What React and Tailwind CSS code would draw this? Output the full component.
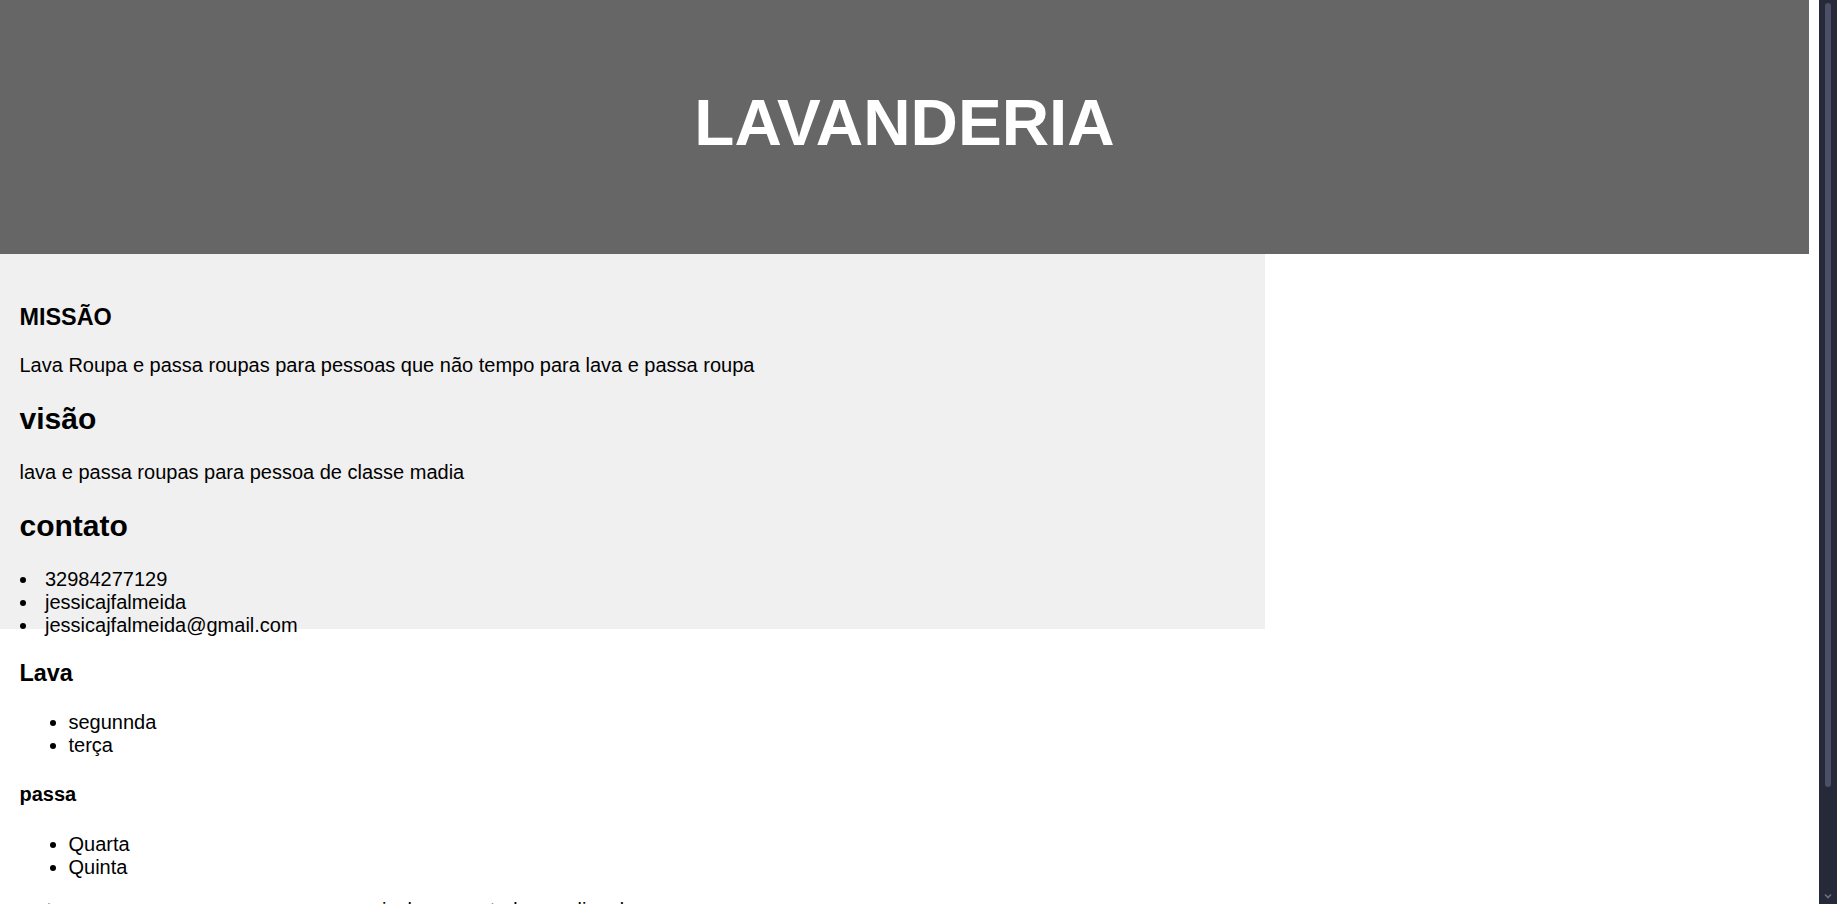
import React from "react";

function Section() {
  return (
    <div className="w-[1265px] h-[375px] bg-[#f0f0f0] pl-[19.5px] pt-[26.3px]">
      <h3 className="text-[23.4px] font-bold leading-[normal] my-[23.4px]">MISSÃO</h3>
      <p className="text-[20px] leading-[normal] my-[20px]">
        Lava Roupa e passa roupas para pessoas que não tempo para lava e passa roupa
      </p>
      <h2 className="text-[30px] font-bold leading-[normal] my-[24.9px]">visão</h2>
      <p className="text-[20px] leading-[normal] my-[20px]">lava e passa roupas para pessoa de classe madia</p>
      <h2 className="text-[30px] font-bold leading-[normal] my-[24.9px]">contato</h2>
      <ul className="list-disc pl-[19px] text-[20px] leading-[normal] mt-[24.9px]">
        <li className="pl-[6.5px]">32984277129</li>
        <li className="pl-[6.5px]">jessicajfalmeida</li>
        <li className="pl-[6.5px]">jessicajfalmeida@gmail.com</li>
      </ul>
    </div>
  );
}

function Scrollbar() {
  return (
    <div className="w-[18px] h-[904px] shrink-0 bg-[#262a38] flex flex-col items-center pt-[3px]">
      <div className="w-[6px] h-[784px] rounded-full bg-[#4b4f68]" />
      <div className="flex-1" />
      <svg width="10" height="8" viewBox="0 0 10 8" className="mb-[4px]">
        <path d="M2 2.5 L5 5.5 L8 2.5" stroke="#6b6f82" strokeWidth="1.6" fill="none" />
      </svg>
    </div>
  );
}

export default function App() {
  return (
    <div
      className="flex h-[904px] w-[1837px] overflow-hidden bg-white text-black"
      style={{ fontFamily: '"Liberation Sans", Arial, sans-serif' }}
    >
      <div className="w-[1819px] shrink-0 h-[904px] overflow-hidden">
        <header className="w-[1809px] h-[254px] bg-[#666666] flex items-center justify-center pb-[10px]">
          <h1 className="text-[65.6px] font-bold leading-[normal] text-white">LAVANDERIA</h1>
        </header>
        <Section />
        <div className="pl-[19.5px] text-[20px] leading-[normal]">
          <h3 className="text-[23.4px] font-bold leading-[normal] mt-[31.3px] mb-[23.4px]">Lava</h3>
          <ul className="list-disc pl-[49px] my-[20px]">
            <li>segunnda</li>
            <li>terça</li>
          </ul>
          <h4 className="text-[20px] font-bold leading-[normal] my-[26.6px]">passa</h4>
          <ul className="list-disc pl-[49px] my-[20px]">
            <li>Quarta</li>
            <li>Quinta</li>
          </ul>
          <p className="my-[20px]">os termos com nossa empresa agora os incluem em todos os dias da semana</p>
        </div>
      </div>
      <Scrollbar />
    </div>
  );
}
